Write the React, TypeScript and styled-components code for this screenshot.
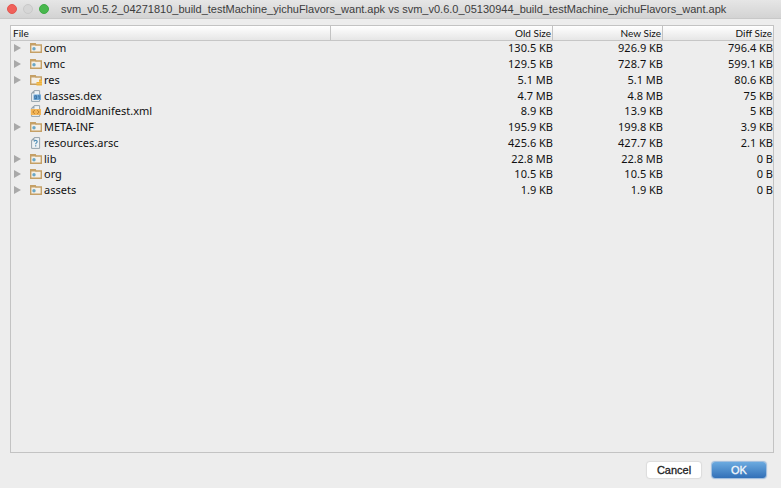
import React from 'react';
import styled, { createGlobalStyle } from 'styled-components';

const GlobalStyle = createGlobalStyle`
  * { box-sizing: border-box; }
  body { margin: 0; background: #ededed; }
`;

const Dialog = styled.main`
  display: flex;
  flex-direction: column;
  min-height: 100vh;
  background: #ededed;
  color: #111;
  font-family: "Noto Sans", sans-serif;
`;

const TitleBar = styled.header`
  display: flex;
  align-items: center;
  height: 19px;
  padding: 0 7px;
  background: linear-gradient(#e6e6e6, #d3d3d3);
  border-bottom: 1px solid #c8c8c8;
`;

const WindowControls = styled.div`
  display: flex;
  gap: 6px;
`;

const WindowButton = styled.button<{ $fill: string; $edge: string }>`
  width: 10px;
  height: 10px;
  padding: 0;
  border: 1px solid ${(p) => p.$edge};
  border-radius: 50%;
  background: ${(p) => p.$fill};
`;

const Title = styled.h1`
  margin: 0 0 0 12px;
  font: 400 11px/18px "Liberation Sans", sans-serif;
  color: #3c3c3c;
  white-space: nowrap;
`;

const TablePane = styled.section`
  flex: 1;
  margin: 6px 7px 0 10px;
  border: 1px solid #c3c3c3;
`;

const FileTable = styled.table`
  width: 100%;
  table-layout: fixed;
  border-collapse: separate;
  border-spacing: 0;
`;

const Column = styled.col<{ $width?: number }>`
  width: ${(p) => (p.$width ? `${p.$width}px` : 'auto')};
`;

const HeadCell = styled.th<{ $numeric?: boolean }>`
  height: 15px;
  padding: 0 ${(p) => (p.$numeric ? 1 : 2)}px;
  background: linear-gradient(#ffffff, #e6e6e6);
  border-bottom: 1px solid #c6c6c6;
  border-right: 1px solid #c3c3c3;
  font-family: Lato, sans-serif;
  font-size: 10px;
  line-height: 14px;
  font-weight: 400;
  text-align: ${(p) => (p.$numeric ? 'right' : 'left')};
  &:last-child { border-right: 0; }
`;

const Row = styled.tr`
  height: 16px;
  font-size: 11px;
  line-height: 14px;
  &:nth-child(4n) { height: 15px; }
`;

const Cell = styled.td`
  padding: 0;
  text-align: right;
  vertical-align: top;
  white-space: nowrap;
`;

const NameCell = styled.div`
  display: flex;
  align-items: center;
  padding-left: 3px;
`;

const Toggle = styled.button`
  display: flex;
  width: 16px;
  padding: 0;
  border: 0;
  background: none;
`;

const Spacer = styled.span`
  width: 16px;
`;

const Name = styled.span`
  margin-left: 2px;
`;

const Icon = styled.svg`
  display: block;
  flex: none;
`;

const Actions = styled.footer`
  display: flex;
  justify-content: flex-end;
  gap: 11px;
  padding: 9px 15px 10px;
`;

const ActionButton = styled.button<{ $primary?: boolean }>`
  width: 54px;
  height: 16px;
  padding: 0;
  border: 0;
  border-radius: 3px;
  font: 400 11px/16px "Liberation Sans", sans-serif;
  -webkit-text-stroke: 0.3px currentColor;
  color: ${(p) => (p.$primary ? '#f4f8fc' : '#222')};
  background: ${(p) => (p.$primary ? 'linear-gradient(#6baae0, #3270b8)' : '#fff')};
  box-shadow: 0 0 1px 1px ${(p) => (p.$primary ? '#9dbbdc' : '#dcdcdc')};
`;

type Kind = 'folder' | 'resources' | 'dex' | 'xml' | 'unknown';

function Arrow() {
  return (
    <Icon width="7" height="8" viewBox="0 0 7 8" aria-hidden="true">
      <path d="M0 0 7 4 0 8Z" fill="#a9a9a9" />
    </Icon>
  );
}

function FolderIcon({ resources }: { resources: boolean }) {
  return (
    <Icon width="12" height="12" viewBox="0 0 12 12" aria-hidden="true">
      <path d="M0.7 3V10.3H11.3V3H6L5.2 1.7H0.7Z" fill="#f4f0e8" stroke="#c5a066" strokeWidth="1.4" />
      <path d="M0 1H5.4L6.4 3.4H0Z" fill="#c5a066" />
      {resources ? (
        <>
          <path d="M9 5.5H12V11.5H6.5V8H9Z" fill="#eeb13b" />
          <path d="M6.5 9.6H12M9 7.4H12" stroke="#f5cf7d" strokeWidth="0.5" />
        </>
      ) : (
        <circle cx="4" cy="6.7" r="1.7" fill="#69a7c8" />
      )}
    </Icon>
  );
}

function FileIcon({ kind }: { kind: Kind }) {
  return (
    <Icon width="12" height="12" viewBox="0 0 12 12" aria-hidden="true">
      <path d="M4.2 0.6H9.6V11.4H1.6V3.2Z" fill="#eef2f4" stroke="#94a2ac" strokeWidth="1" />
      <path d="M1.3 3.5 4.5 0.3V3.5Z" fill="#94a2ac" />
      {kind === 'dex' && (
        <>
          <path d="M3.5 4.5H11V10H3.5Z" fill="#6fa9d8" />
          <path d="M4.8 5.8H6.6V8.7H4.8ZM8 6.2 9.2 5.6V9" fill="none" stroke="#2f6597" strokeWidth="0.8" />
        </>
      )}
      {kind === 'xml' && (
        <>
          <path d="M0.8 4H11V10H0.8Z" fill="#f2b558" />
          <path d="M4.8 5.2 2.8 7 4.8 8.8M7.2 5.2 9.2 7 7.2 8.8" fill="none" stroke="#b4782a" strokeWidth="0.9" />
        </>
      )}
      {kind === 'unknown' && (
        <>
          <path d="M4.1 4.6Q4.2 3.4 5.6 3.4Q7.2 3.4 7.2 4.6Q7.2 5.3 6.4 5.9Q5.7 6.4 5.7 7.3" fill="none" stroke="#4c8bb4" strokeWidth="1.1" />
          <path d="M5.1 8.2H6.3V9.4H5.1Z" fill="#4c8bb4" />
        </>
      )}
    </Icon>
  );
}

const entries: { name: string; kind: Kind; sizes: [string, string, string] }[] = [
  { name: 'com', kind: 'folder', sizes: ['130.5 KB', '926.9 KB', '796.4 KB'] },
  { name: 'vmc', kind: 'folder', sizes: ['129.5 KB', '728.7 KB', '599.1 KB'] },
  { name: 'res', kind: 'resources', sizes: ['5.1 MB', '5.1 MB', '80.6 KB'] },
  { name: 'classes.dex', kind: 'dex', sizes: ['4.7 MB', '4.8 MB', '75 KB'] },
  { name: 'AndroidManifest.xml', kind: 'xml', sizes: ['8.9 KB', '13.9 KB', '5 KB'] },
  { name: 'META-INF', kind: 'folder', sizes: ['195.9 KB', '199.8 KB', '3.9 KB'] },
  { name: 'resources.arsc', kind: 'unknown', sizes: ['425.6 KB', '427.7 KB', '2.1 KB'] },
  { name: 'lib', kind: 'folder', sizes: ['22.8 MB', '22.8 MB', '0 B'] },
  { name: 'org', kind: 'folder', sizes: ['10.5 KB', '10.5 KB', '0 B'] },
  { name: 'assets', kind: 'folder', sizes: ['1.9 KB', '1.9 KB', '0 B'] },
];

export default function App() {
  return (
    <>
      <GlobalStyle />
      <Dialog>
        <TitleBar>
          <WindowControls>
            <WindowButton $fill="#f0605a" $edge="#e2564f" aria-label="Close" />
            <WindowButton $fill="#d6d6d6" $edge="#c9c9c9" aria-label="Minimize" disabled />
            <WindowButton $fill="#48b84d" $edge="#3eaa45" aria-label="Zoom" />
          </WindowControls>
          <Title>svm_v0.5.2_04271810_build_testMachine_yichuFlavors_want.apk vs svm_v0.6.0_05130944_build_testMachine_yichuFlavors_want.apk</Title>
        </TitleBar>
        <TablePane>
          <FileTable>
            <colgroup>
              <Column />
              <Column $width={222} />
              <Column $width={110} />
              <Column $width={110} />
            </colgroup>
            <thead>
              <tr>
                <HeadCell scope="col">File</HeadCell>
                <HeadCell scope="col" $numeric>Old Size</HeadCell>
                <HeadCell scope="col" $numeric>New Size</HeadCell>
                <HeadCell scope="col" $numeric>Diff Size</HeadCell>
              </tr>
            </thead>
            <tbody>
              {entries.map(({ name, kind, sizes }) => {
                const isFolder = kind === 'folder' || kind === 'resources';
                return (
                  <Row key={name}>
                    <Cell>
                      <NameCell>
                        {isFolder ? (
                          <Toggle aria-label={`Expand ${name}`} aria-expanded={false}><Arrow /></Toggle>
                        ) : (
                          <Spacer />
                        )}
                        {isFolder ? <FolderIcon resources={kind === 'resources'} /> : <FileIcon kind={kind} />}
                        <Name>{name}</Name>
                      </NameCell>
                    </Cell>
                    {sizes.map((size, i) => <Cell key={i}>{size}</Cell>)}
                  </Row>
                );
              })}
            </tbody>
          </FileTable>
        </TablePane>
        <Actions>
          <ActionButton>Cancel</ActionButton>
          <ActionButton $primary>OK</ActionButton>
        </Actions>
      </Dialog>
    </>
  );
}
